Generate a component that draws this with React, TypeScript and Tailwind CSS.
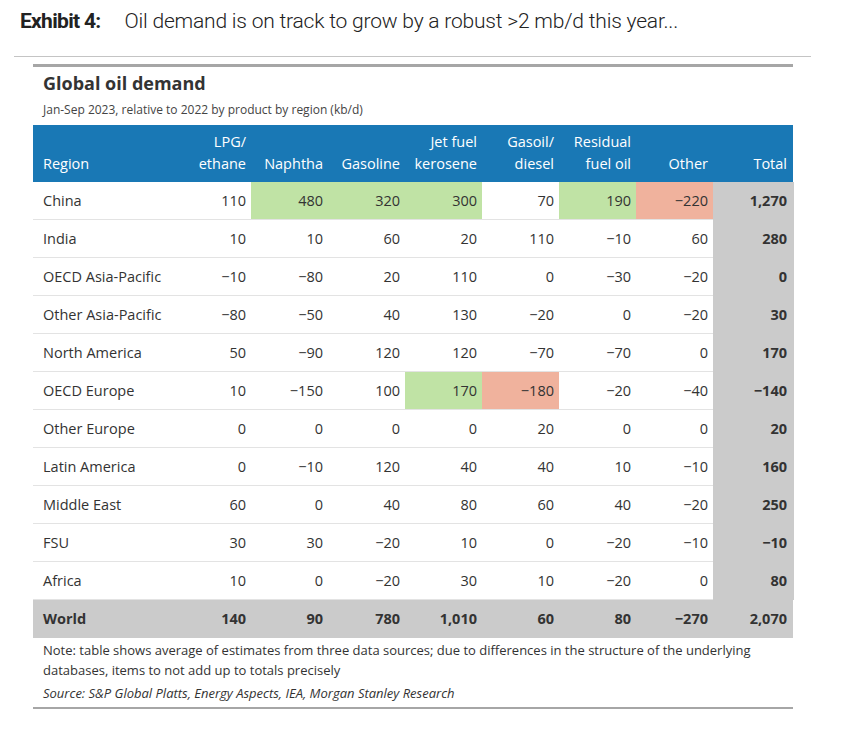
import React from "react";

type Row = { name: string; vals: string[]; total: string; hl?: Record<number, "g" | "r"> };

const M = "\u2212";

const rows: Row[] = [
  { name: "China", vals: ["110", "480", "320", "300", "70", "190", `${M}220`], total: "1,270", hl: { 1: "g", 2: "g", 3: "g", 5: "g", 6: "r" } },
  { name: "India", vals: ["10", "10", "60", "20", "110", `${M}10`, "60"], total: "280" },
  { name: "OECD Asia-Pacific", vals: [`${M}10`, `${M}80`, "20", "110", "0", `${M}30`, `${M}20`], total: "0" },
  { name: "Other Asia-Pacific", vals: [`${M}80`, `${M}50`, "40", "130", `${M}20`, "0", `${M}20`], total: "30" },
  { name: "North America", vals: ["50", `${M}90`, "120", "120", `${M}70`, `${M}70`, "0"], total: "170" },
  { name: "OECD Europe", vals: ["10", `${M}150`, "100", "170", `${M}180`, `${M}20`, `${M}40`], total: `${M}140`, hl: { 3: "g", 4: "r" } },
  { name: "Other Europe", vals: ["0", "0", "0", "0", "20", "0", "0"], total: "20" },
  { name: "Latin America", vals: ["0", `${M}10`, "120", "40", "40", "10", `${M}10`], total: "160" },
  { name: "Middle East", vals: ["60", "0", "40", "80", "60", "40", `${M}20`], total: "250" },
  { name: "FSU", vals: ["30", "30", `${M}20`, "10", "0", `${M}20`, `${M}10`], total: `${M}10` },
  { name: "Africa", vals: ["10", "0", `${M}20`, "30", "10", `${M}20`, "0"], total: "80" },
];

const world = ["140", "90", "780", "1,010", "60", "80", `${M}270`];

const headers: [string, string][] = [
  ["LPG/", "ethane"],
  ["", "Naphtha"],
  ["", "Gasoline"],
  ["Jet fuel", "kerosene"],
  ["Gasoil/", "diesel"],
  ["Residual", "fuel oil"],
  ["", "Other"],
  ["", "Total"],
];

const grid = "grid grid-cols-[141px_repeat(7,77px)_81px]";

export default function App() {
  return (
    <div className="w-[850px] h-[729px] bg-white text-[#333] overflow-hidden" style={{ fontFamily: "'Open Sans', 'Noto Sans', sans-serif" }}>
      <div className="flex items-baseline pl-[20px] pt-[6px] h-[42px]" style={{ fontFamily: "Roboto, sans-serif" }}>
        <span className="text-[21px] font-bold text-[#222] tracking-[-0.7px]">Exhibit 4:</span>
        <span className="ml-[24px] text-[21px] font-light text-[#222] tracking-[-0.2px]">Oil demand is on track to grow by a robust &gt;2 mb/d this year...</span>
      </div>
      <div className="ml-[14px] w-[797px] h-px bg-[#c4c4c4] mt-[14px]" />
      <div className="ml-[33px] w-[760px] mt-[7px]">
        <div className="h-[3px] bg-[#a6a6a6]" />
        <div className="pl-[10px] pt-[4px] text-[18px] font-bold text-[#333] leading-[24px]">Global oil demand</div>
        <div className="pl-[10px] pt-[7px] text-[12px] leading-[16px] text-[#444]">Jan-Sep 2023, relative to 2022 by product by region (kb/d)</div>
        <div className={`${grid} mt-[7px] h-[57px] bg-[#1978b5] text-white text-[14.5px] leading-[22px]`}>
          <div className="flex flex-col justify-end pl-[10px] pb-[7px]">Region</div>
          {headers.map(([a, b], i) => (
            <div key={i} className={`flex flex-col justify-end items-end pb-[7px] ${i === 7 ? "pr-[7px]" : "pr-[5px]"}`}>
              {a && <span>{a}</span>}
              <span>{b}</span>
            </div>
          ))}
        </div>
        {rows.map((r) => (
          <div key={r.name} className={`${grid} h-[38px] text-[14.5px]`}>
            <div className="flex items-center pl-[10px] border-b border-[#e3e3e3]">{r.name}</div>
            {r.vals.map((v, i) => {
              const h = r.hl?.[i];
              const bg = h === "g" ? "bg-[#c0e3a5]" : h === "r" ? "bg-[#f0b29d]" : "bg-white";
              return (
                <div key={i} className={`flex items-center justify-end pr-[5px] border-b border-[#e3e3e3] ${bg}`}>
                  {v}
                </div>
              );
            })}
            <div className="flex items-center justify-end pr-[7px] bg-[#cbcbcb] font-bold">{r.total}</div>
          </div>
        ))}
        <div className={`${grid} h-[38px] text-[14.5px] font-bold bg-[#cbcbcb]`}>
          <div className="flex items-center pl-[10px]">World</div>
          {world.map((v, i) => (
            <div key={i} className="flex items-center justify-end pr-[5px]">{v}</div>
          ))}
          <div className="flex items-center justify-end pr-[7px]">2,070</div>
        </div>
        <div className="pl-[10px] pt-[2px] text-[13px] leading-[20px] text-[#333]">
          Note: table shows average of estimates from three data sources; due to differences in the structure of the underlying databases, items to not add up to totals precisely
        </div>
        <div className="pl-[10px] pt-[3px] text-[13px] leading-[20px] italic text-[#333]">
          Source: S&amp;P Global Platts, Energy Aspects, IEA, Morgan Stanley Research
        </div>
        <div className="mt-[4px] h-[2px] bg-[#a6a6a6]" />
      </div>
    </div>
  );
}
